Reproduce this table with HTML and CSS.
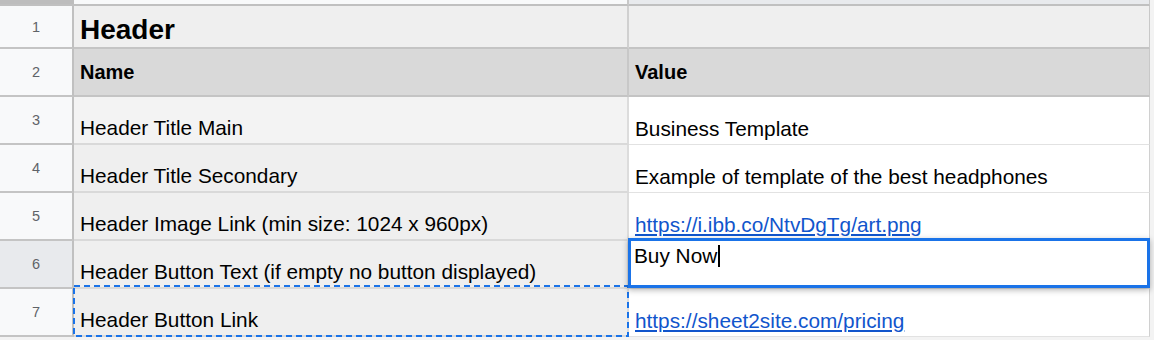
FILE: index.html
```html
<!DOCTYPE html>
<html lang="en">
<head>
    <meta charset="UTF-8">
    <title>Site settings</title>
    <link rel="stylesheet" href="styles.css">
</head>
<body>
    <div class="sheet">
        <div class="corner"></div>
        <div class="col-head"></div>
        <div class="col-head active"></div>

        <div class="row-num">1</div>
        <div class="cell section">Header</div>
        <div class="cell section last"></div>

        <div class="row-num">2</div>
        <div class="cell caption">Name</div>
        <div class="cell caption last">Value</div>

        <div class="row-num">3</div>
        <div class="cell key light">Header Title Main</div>
        <div class="cell val">Business Template</div>

        <div class="row-num">4</div>
        <div class="cell key">Header Title Secondary</div>
        <div class="cell val">Example of template of the best headphones</div>

        <div class="row-num">5</div>
        <div class="cell key">Header Image Link (min size: 1024 x 960px)</div>
        <div class="cell val"><a href="#">https://i.ibb.co/NtvDgTg/art.png</a></div>

        <div class="row-num active">6</div>
        <div class="cell key">Header Button Text (if empty no button displayed)</div>
        <div class="cell val"></div>

        <div class="row-num">7</div>
        <div class="cell key">Header Button Link</div>
        <div class="cell val"><a href="#">https://sheet2site.com/pricing</a></div>

        <!-- copy marquee around A7 -->
        <svg class="marquee" width="556" height="52">
            <rect x="1" y="1" width="554" height="50" fill="none" stroke="#1a73e8" stroke-width="2" stroke-dasharray="6 4"/>
        </svg>

        <!-- in-cell editor on B6 -->
        <div class="editor">Buy Now<span class="caret"></span></div>
    </div>
</body>
</html>
```

FILE: styles.css
```css
body {
    margin: 0;
    background-color: #f3f3f3;
    font-family: "Liberation Sans", Arial, sans-serif;
    color: #000;
}
.sheet {
    position: relative;
    display: grid;
    grid-template-columns: 74px 555px 521px;
    grid-template-rows: 6px 43px repeat(6, 48px);
    background-color: #fff;
    width: 1150px;
}
.corner {
    background-color: #bdbdbd;
    border-bottom: 2px solid #c0c0c0;
}
.col-head {
    background-color: #f8f9fa;
    border-bottom: 2px solid #c0c0c0;
    border-right: 2px solid #c8c8c8;
}
.col-head.active {
    background-color: #e8eaed;
    border-right: 1px solid #c8c8c8;
}
.row-num {
    display: flex;
    align-items: center;
    justify-content: center;
    background-color: #f8f9fa;
    border-right: 2px solid #c0c0c0;
    border-bottom: 2px solid #c4c4c4;
    color: #5f6368;
    font-size: 14.5px;
}
.row-num.active {
    background-color: #e8eaed;
}
.cell {
    display: flex;
    align-items: flex-end;
    padding: 0 6px 3px;
    border-right: 2px solid #dcdcdc;
    border-bottom: 2px solid #d9d9d9;
    font-size: 20.8px;
    white-space: nowrap;
    overflow: hidden;
}
.cell.last {
    border-right: 1px solid #c8c8c8;
}
.section {
    align-items: flex-end;
    padding: 0 6px 1px;
    background-color: #efefef;
    border-bottom-color: #c4c4c4;
    border-right-color: #d0d0d0;
    font-size: 28px;
    font-weight: bold;
}
.caption {
    align-items: center;
    padding: 0 6px;
    background-color: #d9d9d9;
    border-bottom-color: #c4c4c4;
    border-right-color: #c8c8c8;
    font-size: 20px;
    font-weight: bold;
}
.key {
    background-color: #efefef;
}
.key.light {
    background-color: #f3f3f3;
}
.val {
    background-color: #fff;
    border-right: 1px solid #d0d0d0;
    border-bottom: 1px solid #e2e2e2;
}
.val a {
    color: #1155cc;
    text-decoration: underline;
}
.marquee {
    position: absolute;
    left: 73px;
    top: 285px;
}
.editor {
    position: absolute;
    left: 628px;
    top: 238px;
    width: 522px;
    height: 50px;
    box-sizing: border-box;
    padding: 3px 3px;
    border: 3px solid #1a73e8;
    background-color: #fff;
    box-shadow: 0 2px 6px rgba(0, 0, 0, 0.3);
    font-size: 20.8px;
}
.caret {
    display: inline-block;
    width: 1.5px;
    height: 22px;
    margin-left: 1px;
    vertical-align: -4px;
    background-color: #000;
}
```
